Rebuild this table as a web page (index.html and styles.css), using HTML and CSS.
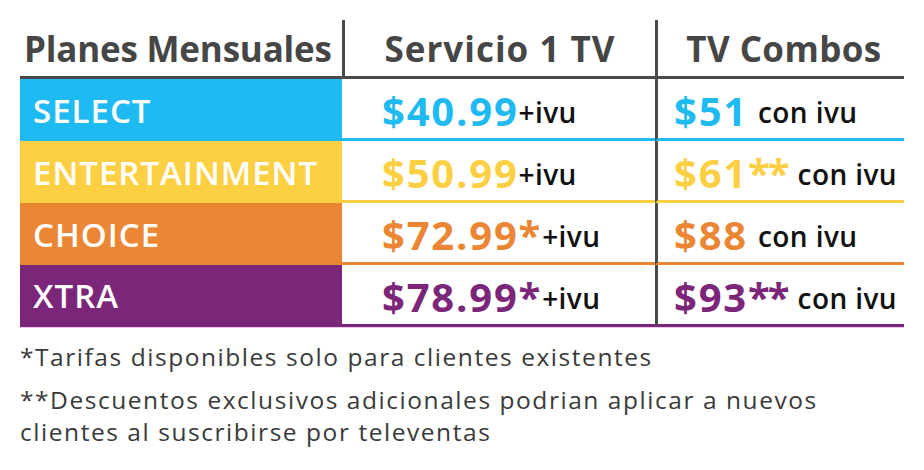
FILE: index.html
```html
<!DOCTYPE html>
<html lang="es">
<head>
<meta charset="utf-8">
<title>Planes Mensuales</title>
<link rel="stylesheet" href="styles.css">
</head>
<body>
<div class="page">
  <div class="table">
    <div class="row head">
      <div class="cell h1">Planes Mensuales</div>
      <div class="cell h2">Servicio 1 TV</div>
      <div class="cell h3">TV Combos</div>
    </div>
    <div class="row plan select">
      <div class="cell label">SELECT</div>
      <div class="cell price p2"><span class="amt">$40.99</span><span class="tax">+ivu</span></div>
      <div class="cell price p3"><span class="amt">$51</span><span class="tax tax-sp">con ivu</span></div>
    </div>
    <div class="row plan ent">
      <div class="cell label">ENTERTAINMENT</div>
      <div class="cell price p2"><span class="amt">$50.99</span><span class="tax">+ivu</span></div>
      <div class="cell price p3"><span class="amt">$61<span class="stars">**</span></span><span class="tax tax-sp">con ivu</span></div>
    </div>
    <div class="row plan choice">
      <div class="cell label">CHOICE</div>
      <div class="cell price p2"><span class="amt">$72.99*</span><span class="tax">+ivu</span></div>
      <div class="cell price p3"><span class="amt">$88</span><span class="tax tax-sp">con ivu</span></div>
    </div>
    <div class="row plan xtra">
      <div class="cell label">XTRA</div>
      <div class="cell price p2"><span class="amt">$78.99*</span><span class="tax">+ivu</span></div>
      <div class="cell price p3"><span class="amt">$93<span class="stars">**</span></span><span class="tax tax-sp">con ivu</span></div>
    </div>
  </div>
  <div class="notes">
    <p class="note">*Tarifas disponibles solo para clientes existentes</p>
    <p class="note">**Descuentos exclusivos adicionales podrian aplicar a nuevos<br>clientes al suscribirse por televentas</p>
  </div>
</div>
</body>
</html>
```

FILE: styles.css
```css
html, body {
  margin: 0;
  padding: 0;
  background: #ffffff;
}

.page {
  width: 924px;
  height: 470px;
  padding: 20px 0 0 20px;
  box-sizing: border-box;
  font-family: "Open Sans", "Noto Sans", sans-serif;
}

.table {
  width: 884px;
  display: flex;
  flex-direction: column;
}

.row {
  display: grid;
  grid-template-columns: 322px 313px 249px;
}

.cell {
  display: flex;
  align-items: center;
  box-sizing: border-box;
  white-space: nowrap;
}

.head {
  height: 59px;
  border-bottom: 3px solid #4a4a4a;
  box-sizing: border-box;
  color: #464646;
  font-weight: 700;
  font-size: 35px;
  letter-spacing: -0.2px;
}

.h1 {
  padding-left: 4px;
}

.h2 {
  justify-content: center;
  border-left: 3px solid #4a4a4a;
  letter-spacing: 1px;
}

.h3 {
  justify-content: center;
  border-left: 3px solid #4a4a4a;
  letter-spacing: 0.4px;
  padding-left: 6px;
}

.plan {
  height: 62px;
}

.label {
  color: #ffffff;
  font-size: 33px;
  font-weight: 600;
  letter-spacing: 1px;
  padding-left: 13px;
  background: var(--c);
}

.price {
  background: #ffffff;
  border-bottom: 3px solid var(--c);
  padding-top: 3px;
}

.p2 {
  padding-left: 40px;
}

.p3 {
  padding-left: 16px;
  border-left: 3px solid #4a4a4a;
}

.amt {
  color: var(--c);
  font-size: 40px;
  font-weight: 700;
  letter-spacing: 1.8px;
}

.stars {
  letter-spacing: -2px;
}

.tax {
  color: #111111;
  font-size: 28px;
  font-weight: 600;
  letter-spacing: 0.4px;
  margin-left: 0;
  padding-top: 4px;
}

.tax-sp {
  margin-left: 10px;
}

.select { --c: #1fbaf1; }
.ent { --c: #fdd044; }
.choice { --c: #ea8634; }
.xtra { --c: #7c2679; }

.xtra {
  box-shadow: 0 1px 0 #ecc8ea;
}

.xtra .label {
  border-bottom: 2px solid #7c2679;
}

.notes {
  margin-top: 14px;
  color: #3a3a3a;
  font-size: 24.5px;
  letter-spacing: 1.55px;
}

.note {
  margin: 0 0 11px 0;
  line-height: 32px;
}
```
